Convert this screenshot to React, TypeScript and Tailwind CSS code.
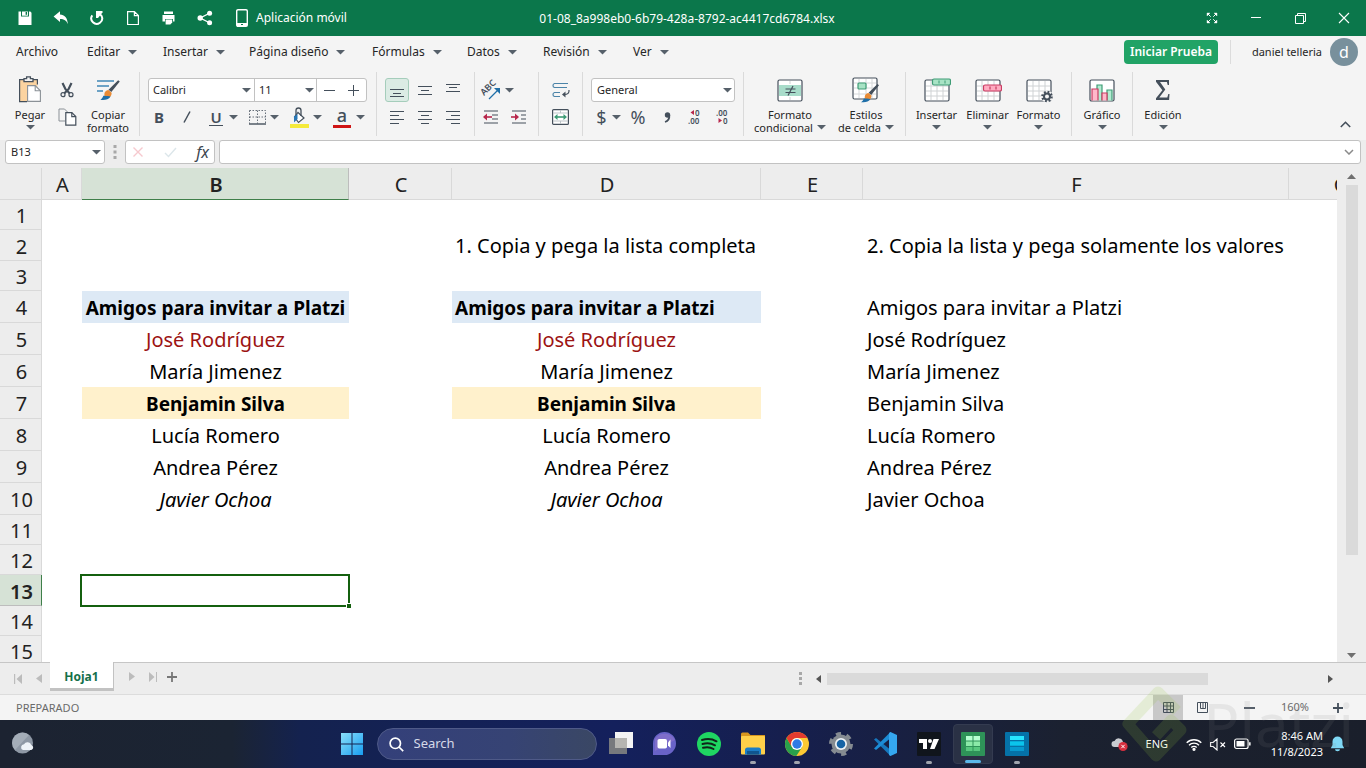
import type { ReactNode } from "react";

type IconProps = { className?: string };

const DARK = "#444f5b";

function Caret({ className = "" }: IconProps) {
  return (
    <svg className={"shrink-0 " + className} width="9" height="5" viewBox="0 0 9 5" aria-hidden="true">
      <path d="M0 0h9L4.5 4.6z" fill="#56606a" />
    </svg>
  );
}

/* ---------- title bar ---------- */

const quickActions: { label: string; icon: ReactNode }[] = [
  {
    label: "Guardar",
    icon: (
      <svg width="16" height="16" viewBox="0 0 16 16" fill="#fff">
        <path fillRule="evenodd" d="M1.500 1.500h11.800l1.200 1.200V15H1.500zM4 1.500v5h8v-5z" />
        <path d="M5 1.500h6v4.200H5z" />
        <path d="M8.600 2h1.500v2.800H8.600z" fill="#0b774b" />
      </svg>
    ),
  },
  {
    label: "Deshacer",
    icon: (
      <svg width="16" height="16" viewBox="0 0 16 16" fill="#fff">
        <path d="M.6 6.400 7 1.200v3.200c4.400 0 7.600 3.400 7.800 9.600-1.300-3.500-3.600-5-7.800-5.100v3z" />
      </svg>
    ),
  },
  {
    label: "Rehacer",
    icon: (
      <svg width="16" height="16" viewBox="0 0 16 16" fill="none" stroke="#fff" strokeWidth="2">
        <path d="M3.300 5.300a5.400 5.400 0 1 0 9.200.6L9.500 3" />
        <path d="M7 1h6.500v1.600L9 8H7z" fill="#fff" stroke="none" />
      </svg>
    ),
  },
  {
    label: "Nuevo",
    icon: (
      <svg width="14" height="16" viewBox="0 0 14 16" fill="none" stroke="#fff" strokeWidth="1.200">
        <path d="M1.600 1.600h6.800l4 4v8.900H1.600zM8.400 1.600v4h4" />
      </svg>
    ),
  },
  {
    label: "Imprimir",
    icon: (
      <svg width="16" height="16" viewBox="0 0 16 16" fill="#fff">
        <path d="M3 1.500h9V4H3zM1.500 5h12v6.500H12V9H4v2.500H1.500z" />
        <path d="M4.600 9.600h6.600v2.800L9.300 14.500H4.600z" />
      </svg>
    ),
  },
  {
    label: "Compartir",
    icon: (
      <svg width="16" height="16" viewBox="0 0 16 16" fill="#fff">
        <path d="M13 3 3.200 8l9.800 5" fill="none" stroke="#fff" strokeWidth="1.400" />
        <circle cx="12.600" cy="3.200" r="2.500" />
        <circle cx="3.200" cy="8" r="2.700" />
        <circle cx="12.600" cy="12.800" r="2.500" />
      </svg>
    ),
  },
];

function TitleBar() {
  return (
    <header className="grid h-9 shrink-0 grid-cols-[1fr_auto_1fr] items-center bg-[#0b774b] text-xs text-white">
      <div className="flex items-center pl-[7px]">
        {quickActions.map((a) => (
          <button key={a.label} aria-label={a.label} className="flex h-9 w-9 items-center justify-center">
            {a.icon}
          </button>
        ))}
        <button className="flex h-9 items-center gap-2 pl-[13px] whitespace-nowrap">
          <svg width="12" height="18" viewBox="0 0 12 18" aria-hidden="true">
            <rect x=".7" y=".7" width="10.600" height="16.600" rx="1.300" fill="none" stroke="#fff" strokeWidth="1.400" />
            <path d="M1 14h10v3H1z" fill="#fff" />
            <path d="M5 15.500h2" stroke="#0b774b" />
          </svg>
          Aplicación móvil
        </button>
      </div>
      <h1 className="pt-0.5 pl-2">01-08_8a998eb0-6b79-428a-8792-ac4417cd6784.xlsx</h1>
      <div className="flex justify-end">
        <button aria-label="Pantalla completa" className="flex h-9 w-11 items-center justify-center">
          <svg width="12" height="12" viewBox="0 0 12 12" fill="#fff" stroke="#fff">
            <path d="M1 1h3L1 4zM11 1v3L8 1zM1 11V8l3 3zM11 11H8l3-3z" strokeWidth=".4" />
            <path d="m2 2 2.700 2.700M10 2 7.300 4.700M2 10l2.700-2.700M10 10 7.300 7.300" />
          </svg>
        </button>
        <button aria-label="Minimizar" className="flex h-9 w-11 items-center justify-center">
          <svg width="10" height="10" viewBox="0 0 10 10"><path d="M0 4.500h10" stroke="#fff" /></svg>
        </button>
        <button aria-label="Restaurar" className="flex h-9 w-11 items-center justify-center">
          <svg width="11" height="11" viewBox="0 0 11 11" fill="none" stroke="#fff">
            <path d="M.5 2.500h8v8h-8zM2.500 2.500v-2h8v8h-2" />
          </svg>
        </button>
        <button aria-label="Cerrar" className="flex h-9 w-11 items-center justify-center">
          <svg width="12" height="12" viewBox="0 0 12 12"><path d="m1 1 10 10M11 1 1 11" stroke="#fff" strokeWidth="1.100" /></svg>
        </button>
      </div>
    </header>
  );
}

/* ---------- menu ---------- */

const menus: { label: string; width: string; caret: boolean }[] = [
  { label: "Archivo", width: "w-[71px]", caret: false },
  { label: "Editar", width: "w-[76px]", caret: true },
  { label: "Insertar", width: "w-[86px]", caret: true },
  { label: "Página diseño", width: "w-[123px]", caret: true },
  { label: "Fórmulas", width: "w-[95px]", caret: true },
  { label: "Datos", width: "w-[76px]", caret: true },
  { label: "Revisión", width: "w-[90px]", caret: true },
  { label: "Ver", width: "w-[60px]", caret: true },
];

function MenuBar() {
  return (
    <nav className="flex h-8 shrink-0 items-center bg-[#f4f4f4] pl-4 text-xs">
      {menus.map((m) => (
        <button key={m.label} className={"flex items-center gap-2 whitespace-nowrap " + m.width}>
          {m.label}
          {m.caret && <Caret />}
        </button>
      ))}
      <div className="ml-auto flex items-center">
        <button className="h-6 w-[94px] rounded-sm bg-[#21a366] text-xs font-semibold whitespace-nowrap text-white">
          Iniciar Prueba
        </button>
        <span className="ml-3 h-6 border-l border-[#dcdcdc]" />
        <button className="flex w-[135px] items-center justify-end gap-2 pr-2 text-[11px] whitespace-nowrap">
          daniel telleria
          <span className="flex h-7 w-7 items-center justify-center rounded-full bg-[#78909c] text-base text-white">d</span>
        </button>
      </div>
    </nav>
  );
}

/* ---------- ribbon ---------- */

function Group({ className = "", children }: { className?: string; children: ReactNode }) {
  return <div className={"flex h-16 shrink-0 border-r border-[#dadada] " + className}>{children}</div>;
}

function Tool({ label, className = "w-7", children }: { label: string; className?: string; children: ReactNode }) {
  return (
    <button aria-label={label} className={"flex h-6 shrink-0 items-center justify-center " + className}>
      {children}
    </button>
  );
}

function BigTool({ lines, caret, className, children }: { lines: string[]; caret?: boolean; className: string; children: ReactNode }) {
  return (
    <button className={"flex shrink-0 flex-col items-center pt-1 text-[11px] leading-[13px] " + className}>
      <span className="mb-1 flex h-7 items-center">{children}</span>
      {lines.map((l, i) => (
        <span key={l} className="flex items-center gap-1 whitespace-nowrap">
          {l}
          {caret && lines.length > 1 && i === lines.length - 1 && <Caret />}
        </span>
      ))}
      {caret && lines.length === 1 && <Caret className="mt-1" />}
    </button>
  );
}

function Lines({ rows }: { rows: [number, number, number][] }) {
  return (
    <svg width="14" height="14" viewBox="0 0 14 14" fill={DARK} shapeRendering="crispEdges" overflow="visible" aria-hidden="true">
      {rows.map(([y, a, b]) => (
        <rect key={y} x={a} y={y} width={b - a} height="1" />
      ))}
    </svg>
  );
}

function TableBase({ children }: { children?: ReactNode }) {
  return (
    <svg width="28" height="26" viewBox="0 0 28 26" fill="none" aria-hidden="true">
      <rect x="2" y="3" width="24" height="21" rx="1.500" fill="#fff" stroke={DARK} strokeWidth="1.200" />
      <path d="M3 9h22M3 14h22M3 19h22M8 4v19M14 4v19M20 4v19" stroke="#cfd2d4" />
      {children}
    </svg>
  );
}

function Brush({ x, y }: { x: number; y: number }) {
  return (
    <g transform={`translate(${x} ${y})`}>
      <path d="M16.500 0 18 1.200 10.200 11 7.600 8.800z" fill={DARK} />
      <path d="M7.500 9 10.500 11.600C10.500 15 8 17 4.500 16.500 2.600 12 4.500 9.300 7.500 9z" fill="#e98b35" />
      <path d="M2.800 14.500c2 .2 4.300-.2 6.700.6C7.500 18.200 4 18.700 0 18.200c1.500-.8 2.200-2 2.800-3.700z" fill="#1f6fa8" />
    </g>
  );
}

function Ribbon() {
  return (
    <div className="flex h-[72px] shrink-0 overflow-hidden bg-[#f4f4f4] pt-1" role="toolbar" aria-label="Inicio">
      <Group className="w-[140px] pl-2">
        <BigTool lines={["Pegar"]} caret className="w-11">
          <svg width="24" height="28" viewBox="0 0 24 28" fill="none">
            <path d="M1.600 3.600h17.800v22H1.600z" fill="#fbd3a0" />
            <path d="M6 3.600H1.600v22H9M15 3.600h4.400v5" stroke={DARK} strokeWidth="1.200" />
            <path d="M6 2.600h2.600V.8h3.800v1.800H15v3H6z" fill="#f4f4f4" stroke={DARK} strokeWidth="1.300" />
            <path d="M9.600 9.600h7.600l5.200 5.200v10.600H9.600z" fill="#fff" stroke="#8b9197" strokeWidth="1.100" />
            <path d="M17.200 9.600v5.200h5.200" stroke="#8b9197" strokeWidth="1.100" />
          </svg>
        </BigTool>
        <div className="flex flex-col gap-[3px] pt-[6px]">
          <Tool label="Cortar" className="w-[30px]">
            <svg width="14" height="16" viewBox="0 0 14 16" fill="none" stroke={DARK}>
              <path d="M2.500 1 5.500 7.200l4.100 4M11.500 1 8.500 7.200l-4.100 4" strokeWidth="2.200" />
              <circle cx="3" cy="12.700" r="2" strokeWidth="1.200" />
              <circle cx="11" cy="12.700" r="2" strokeWidth="1.200" />
            </svg>
          </Tool>
          <Tool label="Copiar" className="w-[30px]">
            <svg width="19" height="18" viewBox="0 0 19 18" fill="none">
              <path d="M7 13H1V1h5.500l3 3" stroke="#8b9197" />
              <path d="M7.800 4.600h6l4 4v8.600h-10z" fill="#fff" stroke={DARK} strokeWidth="1.200" />
              <path d="M13.800 4.600v4h4" stroke={DARK} strokeWidth="1.200" />
            </svg>
          </Tool>
        </div>
        <BigTool lines={["Copiar", "formato"]} className="w-[52px]">
          <svg width="25" height="24" viewBox="0 0 25 24" fill="none">
            <path d="M1 3h17M1 8h12M1 13h6" stroke="#3f87b5" strokeWidth="1.300" />
            <g transform="scale(1.080)"><Brush x={4} y={2} /></g>
          </svg>
        </BigTool>
      </Group>

      <Group className="w-[237px] flex-col gap-[3px] pt-[6px] pl-2">
        <div className="flex h-6 w-[219px] items-center rounded-[3px] border border-[#c2c2c2] bg-white text-[11px]">
          <select aria-label="Fuente" className="w-[93px] appearance-none pl-1 outline-none"><option>Calibri</option></select>
          <Caret />
          <select aria-label="Tamaño" className="ml-[3px] h-full w-[51px] appearance-none border-l border-[#c2c2c2] pl-1 outline-none"><option>11</option></select>
          <Caret />
          <button aria-label="Reducir" className="ml-[2px] flex h-full flex-1 items-center justify-center border-l border-[#c2c2c2]">
            <svg width="11" height="11" viewBox="0 0 11 11"><path d="M0 5.500h11" stroke={DARK} /></svg>
          </button>
          <button aria-label="Aumentar" className="flex h-full flex-1 items-center justify-center">
            <svg width="11" height="11" viewBox="0 0 11 11"><path d="M0 5.500h11M5.500 0v11" stroke={DARK} /></svg>
          </button>
        </div>
        <div className="flex text-[#444f5b]">
          <Tool label="Negrita" className="w-[22px]"><b className="text-[15px]">B</b></Tool>
          <Tool label="Cursiva" className="w-[33px]">
            <svg width="8" height="12" viewBox="0 0 8 12"><path d="M7 .5 1 11.500" stroke={DARK} strokeWidth="1.500" /></svg>
          </Tool>
          <div className="flex w-[41px] items-center">
            <Tool label="Subrayado" className="w-[26px]"><span className="border-b border-[#444f5b] px-px text-[15px] leading-4 font-semibold">U</span></Tool>
            <Caret />
          </div>
          <div className="flex w-[41px] items-center">
            <Tool label="Bordes" className="w-[26px]">
              <svg width="17" height="15" viewBox="0 0 17 15" fill="none" stroke={DARK}>
                <path d="M.5.5h16v13M.5.5v13M8.500.5v13M.5 7h16" strokeDasharray="1.500 1.500" opacity=".8" />
                <path d="M0 14h17" strokeWidth="1.400" />
              </svg>
            </Tool>
            <Caret />
          </div>
          <div className="flex w-[43px] items-center">
            <Tool label="Relleno" className="w-[28px]">
              <svg width="19" height="21" viewBox="0 0 19 21" fill="none">
                <path d="M0 17h19v4H0z" fill="#f5ea3b" />
                <path d="m8 5.500 6 5.500-5.500 4.500L4.500 10z" fill="#fff" stroke={DARK} strokeWidth="1.200" />
                <path d="M6 9V3.500a2.500 2.500 0 0 1 5 0V9" stroke={DARK} strokeWidth="1.300" />
                <path d="M4 15.500V9.500L7.500 7v5z" fill="#2b78b5" />
              </svg>
            </Tool>
            <Caret />
          </div>
          <div className="flex items-center">
            <Tool label="Color de fuente" className="w-[28px]">
              <span className="flex h-[21px] w-[18px] items-start justify-center border-b-[3px] border-[#cf1414] text-lg leading-4 font-medium">a</span>
            </Tool>
            <Caret />
          </div>
        </div>
      </Group>

      <Group className="w-[97px] flex-col gap-[3px] border-r-0 pt-[6px] pl-[6px]">
        <div className="flex">
          <Tool label="Alinear abajo" className="mx-0.5 w-6 rounded-[3px] border border-[#a5cdbb] bg-[#dbebe4]"><Lines rows={[[6, 0, 14], [10, 3, 11], [13, 0, 14]]} /></Tool>
          <Tool label="Alinear en medio"><Lines rows={[[3, 0, 14], [7, 3, 11], [11, 0, 14]]} /></Tool>
          <Tool label="Alinear arriba"><Lines rows={[[1, 0, 14], [4, 3, 11], [8, 0, 14]]} /></Tool>
        </div>
        <div className="flex">
          <Tool label="Izquierda"><Lines rows={[[1, 0, 14], [5, 0, 9], [9, 0, 14], [13, 0, 9]]} /></Tool>
          <Tool label="Centro"><Lines rows={[[1, 0, 14], [5, 3, 11], [9, 0, 14], [13, 3, 11]]} /></Tool>
          <Tool label="Derecha"><Lines rows={[[1, 0, 14], [5, 5, 14], [9, 0, 14], [13, 5, 14]]} /></Tool>
        </div>
      </Group>

      <Group className="w-[65px] flex-col gap-[3px] border-l pt-[6px] pl-px">
        <div className="flex items-center">
          <Tool label="Orientación">
            <svg width="24" height="24" viewBox="0 0 24 24" overflow="visible">
              <text transform="translate(6 18) rotate(-45)" fontSize="9" fontWeight="600" fill={DARK}>ABC</text>
              <path d="m11 21 9-9" stroke="#1f6fa8" strokeWidth="1.300" />
              <path d="M16 10h6v6z" fill="#1f6fa8" />
            </svg>
          </Tool>
          <Caret className="ml-px" />
        </div>
        <div className="flex">
          <Tool label="Reducir sangría">
            <svg width="15" height="14" viewBox="0 0 15 14" fill="none" stroke={DARK} strokeWidth="1.200">
              <path d="M1 1h14M9 5h6M9 9h6M1 13h14" />
              <path d="M4 7h5" stroke="#b8274c" strokeWidth="1.600" /><path d="m0 7 4-3.500v7z" fill="#b8274c" stroke="none" />
            </svg>
          </Tool>
          <Tool label="Aumentar sangría">
            <svg width="15" height="14" viewBox="0 0 15 14" fill="none" stroke={DARK} strokeWidth="1.200">
              <path d="M1 1h14M10 5h5M10 9h5M1 13h14" />
              <path d="M0 7h5" stroke="#b8274c" strokeWidth="1.600" /><path d="M8 7 4 3.500v7z" fill="#b8274c" stroke="none" />
            </svg>
          </Tool>
        </div>
      </Group>

      <Group className="w-[44px] flex-col items-center gap-[3px] pt-[6px]">
        <Tool label="Ajustar texto">
          <svg width="18" height="16" viewBox="0 0 18 16" fill="none" stroke="#4c84a8" strokeWidth="1.200">
            <path d="M15 5.500H2.500a2 2 0 0 1-1.500-2 2 2 0 0 1 1.500-2H16M8 14.500H2.500a2 2 0 0 1-1.500-2 2 2 0 0 1 1.500-2H8" />
            <path d="M17 8c.3 3-1 4.500-5 4.500" stroke={DARK} /><path d="M13.500 9.500v6L10 12.500z" fill={DARK} stroke="none" />
          </svg>
        </Tool>
        <Tool label="Combinar">
          <svg width="17" height="16" viewBox="0 0 17 16" fill="none">
            <rect x=".6" y=".6" width="15.800" height="14.800" rx="1" fill="#fff" stroke={DARK} strokeWidth="1.200" />
            <path d="M1 4h15M1 12h15M8.500 1v3M8.500 12v3" stroke="#bfc5c9" />
            <path d="M4 8h9" stroke="#3f9c76" strokeWidth="1.600" />
            <path d="M2 8l3.500-3v6zM15 8l-3.500-3v6z" fill="#3f9c76" />
          </svg>
        </Tool>
      </Group>

      <Group className="w-[161px] flex-col gap-[3px] pt-[6px] pl-2">
        <div className="flex h-6 w-[144px] items-center rounded-[3px] border border-[#c2c2c2] bg-white text-[11px]">
          <select aria-label="Formato de número" className="w-[131px] appearance-none pl-[5px] outline-none"><option>General</option></select>
          <Caret />
        </div>
        <div className="flex items-center text-[#444f5b]">
          <Tool label="Moneda" className="w-[21px]"><span className="text-lg">$</span></Tool>
          <Caret />
          <Tool label="Porcentaje" className="ml-[2px] w-[30px]"><span className="text-lg">%</span></Tool>
          <Tool label="Separador">
            <svg width="7" height="11" viewBox="0 0 7 11"><circle cx="3.500" cy="3" r="2.700" fill={DARK} /><path d="M5.300 3c.3 3.500-1.200 6-4.300 7" fill="none" stroke={DARK} strokeWidth="1.800" /></svg>
          </Tool>
          <Tool label="Aumentar decimales">
            <svg width="16" height="18" viewBox="0 0 16 18" fill={DARK} fontSize="8" fontWeight="600" overflow="visible"><path d="M7 2v5L3.500 4.500z" fill="#b8274c" /><text x="8" y="8">0</text><text x="1" y="16">.00</text></svg>
          </Tool>
          <Tool label="Disminuir decimales">
            <svg width="16" height="18" viewBox="0 0 16 18" fill={DARK} fontSize="8" fontWeight="600" overflow="visible"><path d="M3.500 10v5L7 12.500z" fill="#b8274c" /><text x="8" y="16">0</text><text x="1" y="8">.00</text></svg>
          </Tool>
        </div>
      </Group>

      <Group className="w-[162px] pl-2">
        <BigTool lines={["Formato", "condicional"]} caret className="w-[76px]">
          <svg width="28" height="26" viewBox="0 0 28 26" fill="none">
            <rect x="2" y="3" width="24" height="21" rx="1.500" fill="#fff" stroke={DARK} strokeWidth="1.200" />
            <path d="M3 8h22v11H3z" fill="#a8dcca" /><path d="M14 4v3M14 20v3" stroke="#cfd2d4" />
            <path d="M9.500 12h10M9.500 15.500h10M17 9l-5 9.500" stroke={DARK} strokeWidth="1.200" />
          </svg>
        </BigTool>
        <BigTool lines={["Estilos", "de celda"]} caret className="w-[76px]">
          <svg width="28" height="28" viewBox="0 0 28 28" fill="none">
            <rect x="1" y="2" width="24" height="21" rx="1.500" fill="#fff" stroke={DARK} strokeWidth="1.200" />
            <path d="M2 7h22M2 12h22M2 18h22M7 3v19M14 3v19M20 3v19" stroke="#d5d8da" />
            <rect x="6" y="7" width="8" height="6" rx="1" fill="#a8e3c5" stroke="#3f9c76" strokeWidth="1.200" />
            <Brush x={9} y={8} />
          </svg>
        </BigTool>
      </Group>

      <Group className="w-[166px] pl-[5px]">
        <BigTool lines={["Insertar"]} caret className="w-[51px]">
          <TableBase>
            <rect x="9.500" y="2" width="18" height="6" rx="1.500" fill="#a8e3c5" stroke="#3f9c76" strokeWidth="1.200" />
            <path d="M16 3.500v3M22 3.500v3" stroke="#3f9c76" />
          </TableBase>
        </BigTool>
        <BigTool lines={["Eliminar"]} caret className="w-[51px]">
          <TableBase>
            <rect x="9.500" y="8" width="18" height="6" rx="1.500" fill="#ffabc1" stroke="#c93b62" strokeWidth="1.200" />
            <path d="M16 9.500v3M22 9.500v3" stroke="#b8274c" />
          </TableBase>
        </BigTool>
        <BigTool lines={["Formato"]} caret className="w-[51px]">
          <TableBase>
            <circle cx="22" cy="19.500" r="6" fill="#f4f4f4" />
            <circle cx="22" cy="19.500" r="4.600" fill="none" stroke={DARK} strokeWidth="2.400" strokeDasharray="1.800 1.810" />
            <circle cx="22" cy="19.500" r="3" fill="none" stroke={DARK} strokeWidth="2" />
          </TableBase>
        </BigTool>
      </Group>

      <Group className="w-[61px]">
        <BigTool lines={["Gráfico"]} caret className="w-full">
          <svg width="28" height="26" viewBox="0 0 28 26" fill="none" strokeWidth="1.200">
            <rect x="2" y="3" width="24" height="21" rx="1.500" fill="#fff" stroke={DARK} />
            <path d="M9 23.500V8h5v15.500M19 23.500V13h5v10.500" fill="#b3ecd2" stroke="#3f9c76" />
            <path d="M4 23.500V12h6v11.500M14 23.500V16h5v7.500" fill="#ffb8ca" stroke="#c93b62" />
          </svg>
        </BigTool>
      </Group>

      <BigTool lines={["Edición"]} caret className="h-16 w-[60px]">
        <svg width="16" height="22" viewBox="0 0 16 22"><path d="M1 1h13v5h-1.300l-.8-3H5l5.300 7.600L4.300 18.500h8l1-3.500h1.200l-.4 6H1v-1.800l6.400-8L1 2.800z" fill={DARK} /></svg>
      </BigTool>
      <button aria-label="Contraer cinta" className="mt-auto mr-[15px] mb-3 ml-auto">
        <svg width="11" height="7" viewBox="0 0 11 7" fill="none" stroke={DARK} strokeWidth="1.600"><path d="m.8 6 4.700-4.700L10.200 6" /></svg>
      </button>
    </div>
  );
}

/* ---------- formula bar ---------- */

function FormulaBar() {
  return (
    <div className="flex h-7 shrink-0 bg-[#ededed] pr-[5px] pb-1 pl-[5px] text-[11px]">
      <div className="flex w-[100px] items-center rounded-[3px] border border-[#c2c2c2] bg-white">
        <input aria-label="Cuadro de nombres" defaultValue="B13" className="w-[86px] bg-transparent pl-[5px] outline-none" />
        <Caret />
      </div>
      <svg className="mx-2 my-auto" width="4" height="14" viewBox="0 0 4 14" fill="#a8a8a8" aria-hidden="true">
        <path d="M.5 0h3v3h-3zM.5 5.500h3v3h-3zM.5 11h3v3h-3z" />
      </svg>
      <div className="flex w-[90px] items-center justify-between rounded-[3px] border border-[#c2c2c2] bg-white pr-[5px] pl-[6px]">
        <button aria-label="Cancelar">
          <svg width="12" height="12" viewBox="0 0 12 12"><path d="m1.500 1.500 9 9M10.500 1.500l-9 9" stroke="#f6c9ce" strokeWidth="1.400" /></svg>
        </button>
        <button aria-label="Aceptar">
          <svg width="13" height="12" viewBox="0 0 13 12"><path d="m1 7 3.500 3.500L12 2" fill="none" stroke="#dce6ea" strokeWidth="1.400" /></svg>
        </button>
        <button className="text-base leading-5 text-[#3c4650] italic">fx</button>
      </div>
      <div className="ml-1 flex flex-1 items-center rounded-[3px] border border-[#c2c2c2] bg-white pr-[6px]">
        <input aria-label="Barra de fórmulas" className="h-full min-w-0 flex-1 bg-transparent px-2 outline-none" />
        <svg width="10" height="6" viewBox="0 0 10 6" fill="none" stroke="#8a8a8a" strokeWidth="1.500" aria-hidden="true"><path d="m1 1 4 4 4-4" /></svg>
      </div>
    </div>
  );
}

/* ---------- sheet ---------- */

const columns = [
  { name: "A", width: "w-[40px]" },
  { name: "B", width: "w-[267px]" },
  { name: "C", width: "w-[103px]" },
  { name: "D", width: "w-[309px]" },
  { name: "E", width: "w-[102px]" },
  { name: "F", width: "w-[426px]" },
  { name: "G", width: "w-[103px]" },
];

const rowHeights = [
  "h-[30px]", "h-[31px]", "h-[30px]", "h-8", "h-8", "h-8", "h-8", "h-8",
  "h-8", "h-8", "h-[30px]", "h-[30px]", "h-[31px]", "h-[30px]", "h-[30px]",
];

const cells: Record<string, { text: string; className: string }> = {
  D2: { text: "1. Copia y pega la lista completa", className: "pl-[3px]" },
  F2: { text: "2. Copia la lista y pega solamente los valores", className: "pl-1" },
  B4: { text: "Amigos para invitar a Platzi", className: "bg-[#dde9f5] pt-0.5 text-center text-[19px] font-bold" },
  D4: { text: "Amigos para invitar a Platzi", className: "bg-[#dde9f5] pt-0.5 pl-[3px] text-[19px] font-bold" },
  F4: { text: "Amigos para invitar a Platzi", className: "pt-0.5 pl-1" },
};

const friends = [
  { name: "José Rodríguez", className: "pt-0.5 text-center text-[#9c1313]" },
  { name: "María Jimenez", className: "pt-0.5 text-center" },
  { name: "Benjamin Silva", className: "bg-[#fff1cc] pt-0.5 text-center text-[19px] font-bold" },
  { name: "Lucía Romero", className: "pt-0.5 text-center" },
  { name: "Andrea Pérez", className: "pt-0.5 text-center" },
  { name: "Javier Ochoa", className: "pt-0.5 text-center italic" },
];

friends.forEach((f, i) => {
  cells["B" + (i + 5)] = { text: f.name, className: f.className };
  cells["D" + (i + 5)] = { text: f.name, className: f.className };
  cells["F" + (i + 5)] = { text: f.name, className: "pt-0.5 pl-1" };
});

function Sheet() {
  return (
    <div className="flex min-h-0 flex-1 bg-[#ededed]">
      <div className="min-w-0 flex-1 overflow-hidden bg-white">
        <table className="w-[1392px] table-fixed border-separate border-spacing-0 text-xl leading-7 text-black">
          <colgroup>
            <col className="w-[42px]" />
            {columns.map((c) => <col key={c.name} className={c.width} />)}
          </colgroup>
          <thead>
            <tr className="h-8 text-[#222]">
              <th className="border-r border-b border-[#d9d9d9] bg-[#ededed] p-0" aria-label="Seleccionar todo" />
              {columns.map((c) => (
                <th
                  key={c.name}
                  scope="col"
                  className={c.name === "B"
                    ? "border-r border-b border-r-[#bdbdbd] border-b-[#3f7f4a] bg-[#d6e2d6] p-0 pt-[3px] pl-0.5 leading-6 font-semibold"
                    : "border-r border-b border-[#d9d9d9] bg-[#ededed] p-0 pt-[3px] pl-0.5 leading-6 font-normal"}
                >
                  {c.name}
                </th>
              ))}
            </tr>
          </thead>
          <tbody>
            {rowHeights.map((h, i) => (
              <tr key={i} className={h}>
                <th
                  scope="row"
                  className={i === 12
                    ? "border-r border-b border-r-[#3f7f4a] border-b-[#bdbdbd] bg-[#d6e2d6] p-0 pt-[3px] pl-0.5 leading-6 font-semibold text-[#222]"
                    : "border-r border-b border-[#d9d9d9] bg-[#ededed] p-0 pt-[3px] pl-0.5 leading-6 font-normal text-[#222]"}
                >
                  {i + 1}
                </th>
                {columns.map((c) => {
                  const key = c.name + (i + 1);
                  const cell = cells[key];
                  if (key === "B13") {
                    return (
                      <td key={key} className="relative p-0">
                        <div className="absolute -top-px -right-px -bottom-px -left-0.5 border-2 border-[#14600f]">
                          <span className="absolute -right-[3px] -bottom-[3px] h-[5px] w-[5px] border-t border-l border-white bg-[#14600f]" />
                        </div>
                      </td>
                    );
                  }
                  return (
                    <td key={key} className={"whitespace-nowrap " + (cell ? cell.className : "p-0")}>
                      {cell ? cell.text : null}
                    </td>
                  );
                })}
              </tr>
            ))}
          </tbody>
        </table>
      </div>
      <div className="flex w-[29px] shrink-0 flex-col items-center gap-[5px] pt-[6px] pb-[3px]">
        <svg className="shrink-0" width="9" height="6" viewBox="0 0 9 6" aria-hidden="true"><path d="M0 5h9L4.500 0z" fill="#707070" /></svg>
        <div className="min-h-0 w-3 flex-1"><div className="h-[80%] bg-[#dadada]" /></div>
        <svg className="shrink-0" width="9" height="6" viewBox="0 0 9 6" aria-hidden="true"><path d="M0 0h9L4.500 5z" fill="#707070" /></svg>
      </div>
    </div>
  );
}

function SheetTabs() {
  return (
    <div className="flex h-[33px] shrink-0 border-t border-b border-t-[#c6c6c6] border-b-[#dcdcdc] bg-[#ededed]">
      <div className="flex w-[50px] items-center gap-[13px] pl-[14px]">
        <button aria-label="Primera hoja"><svg width="9" height="10" viewBox="0 0 9 10" fill="#bcbcbc"><path d="M0 0h1.200v10H0zM8 0v10L2.500 5z" /></svg></button>
        <button aria-label="Hoja anterior"><svg width="6" height="9" viewBox="0 0 6 9"><path d="M6 0v9L0 4.500z" fill="#bcbcbc" /></svg></button>
      </div>
      <button className="-mt-px h-[29px] w-16 border-r border-b-[3px] border-[#c2c2c2] bg-white pt-1 text-xs font-bold text-[#14704a]">Hoja1</button>
      <div className="flex items-center gap-[14px] pb-1 pl-[15px]">
        <button aria-label="Hoja siguiente"><svg width="6" height="9" viewBox="0 0 6 9"><path d="M0 0v9l6-4.500z" fill="#bcbcbc" /></svg></button>
        <button aria-label="Última hoja"><svg width="8" height="10" viewBox="0 0 8 10" fill="#bcbcbc"><path d="M7 0h1v10H7zM0 0v10l5.500-5z" /></svg></button>
        <button aria-label="Agregar hoja" className="-ml-1"><svg width="10" height="10" viewBox="0 0 10 10"><path d="M0 5h10M5 0v10" stroke="#777" strokeWidth="1.800" /></svg></button>
      </div>
      <div className="ml-auto flex w-[567px] items-center pr-[33px]">
        <svg width="3" height="13" viewBox="0 0 3 13" fill="#a8a8a8" aria-hidden="true"><path d="M0 0h3v3H0zM0 5h3v3H0zM0 10h3v3H0z" /></svg>
        <svg className="mr-[6px] ml-[14px]" width="5" height="8" viewBox="0 0 5 8" aria-hidden="true"><path d="M5 0v8L0 4z" fill="#555" /></svg>
        <div className="h-3 flex-1"><div className="h-full w-[76%] bg-[#dadada]" /></div>
        <svg width="5" height="8" viewBox="0 0 5 8" aria-hidden="true"><path d="M0 0v8l5-4z" fill="#555" /></svg>
      </div>
    </div>
  );
}

function StatusBar() {
  return (
    <div className="flex h-[25px] shrink-0 items-center bg-[#f4f4f4] pl-4 text-[11px] text-[#6a6a6a]">
      <span className="pt-0.5">PREPARADO</span>
      <div className="ml-auto flex h-full items-center pr-[23px]">
        <button aria-label="Vista normal" className="flex h-full w-[30px] items-center justify-center bg-[#c8c8c8]">
          <svg width="11" height="11" viewBox="0 0 11 11" fill="none" stroke={DARK}><path d="M.5.5h10v10H.5zM.5 4h10M.5 7.500h10M4 .5v10M7.500.5v10" /></svg>
        </button>
        <button aria-label="Diseño de página" className="ml-[14px]">
          <svg width="11" height="11" viewBox="0 0 11 11" fill="none" stroke={DARK}><path d="M.5.5h10v10H.5zM3.500.5v6h5v-6M6 .5v6" /></svg>
        </button>
        <button aria-label="Alejar" className="ml-9"><svg width="11" height="10" viewBox="0 0 11 10"><path d="M0 5h11" stroke={DARK} strokeWidth="1.800" /></svg></button>
        <span className="w-[78px] pl-0.5 text-center">160%</span>
        <button aria-label="Acercar"><svg width="10" height="10" viewBox="0 0 10 10"><path d="M0 5h10M5 0v10" stroke={DARK} strokeWidth="1.800" /></svg></button>
      </div>
    </div>
  );
}

/* ---------- taskbar ---------- */

const apps: { label: string; state?: "open" | "active"; icon: ReactNode }[] = [
  { label: "Vista de tareas", icon: <><path d="M8 1h18v16H8z" fill="#f4f4f4" /><path d="M2 7h18v16H2z" fill="#77797d" /><path d="M8 7h12v10H8z" fill="#b6b5b1" /></> },
  {
    label: "Chat",
    icon: <><path d="M2 24V12.500A11.500 11.500 0 1 1 13.500 24z" fill="#6963c8" /><path d="M4 8a11.500 11.500 0 0 1 20 1L4 20z" fill="#8d74c9" opacity=".6" /><rect x="6.500" y="8" width="9.500" height="9.500" rx="1.800" fill="#fff" /><path d="m17 11.500 2.500-3v8.500L17 14.500z" fill="#fff" /></>,
  },
  {
    label: "Spotify",
    icon: <><circle cx="14" cy="13" r="12" fill="#1fd662" /><path d="M7 9c5-1.500 10.500-1 14.500 1.300M7.500 13c4.500-1.200 9-.700 12.500 1.300M8 16.800c3.800-1 7.500-.6 10.500 1.200" fill="none" stroke="#10241a" strokeWidth="2" strokeLinecap="round" /></>,
  },
  {
    label: "Explorador",
    state: "open",
    icon: <><path d="M2 3a1.500 1.500 0 0 1 1.500-1.500H9L11.500 4H26v6H2z" fill="#d8961e" /><rect x="2" y="5" width="24" height="18.500" rx="1" fill="#ffd04a" /><path d="M6 23.500V19a2.500 2.500 0 0 1 2.500-2.500h11A2.500 2.500 0 0 1 22 19v4.500z" fill="#1b7dc6" /><path d="M8 20h12v3.500H8z" fill="#10568f" /></>,
  },
  {
    label: "Chrome",
    state: "open",
    icon: <><circle cx="14" cy="13" r="12" fill="#fcc934" /><path d="M3.600 7A12 12 0 0 0 13.300 25L19.200 16 14 13 9 16z" fill="#29a14b" /><path d="M24.400 7H14a6 6 0 0 0-5.300 3.200L8.800 16 3.600 7A12 12 0 0 1 24.400 7z" fill="#e33b2e" /><circle cx="14" cy="13" r="6" fill="#fff" /><circle cx="14" cy="13" r="4.700" fill="#2f7ae5" /></>,
  },
  {
    label: "Configuración",
    icon: <><circle cx="14" cy="13" r="9.500" fill="#858b91" /><circle cx="14" cy="13" r="10" fill="none" stroke="#858b91" strokeWidth="4" strokeDasharray="5 5.470" /><circle cx="14" cy="13" r="6" fill="#eef2f5" /><circle cx="14" cy="13" r="4.300" fill="#1764a5" /></>,
  },
  {
    label: "Visual Studio Code",
    icon: <><path d="M3 8.500 5 7l16 13-1.500 5z" fill="#1677bd" /><path d="m3 17.500 2 1.500L21 6l-1.500-5z" fill="#1c8cd6" /><path d="M19.500 1 26 4v18l-6.500 3-1.500-1V2z" fill="#35a7ef" /></>,
  },
  {
    label: "TradingView",
    state: "open",
    icon: <><rect x="2" y="1" width="24" height="24" rx="1" fill="#10151c" /><path d="M4 8h8v10H8v-6H4zM18.500 8H24l-4.500 10H15z" fill="#fff" /><circle cx="15" cy="10" r="2" fill="#fff" /></>,
  },
  {
    label: "Hojas de cálculo",
    state: "active",
    icon: <><rect x="2" y="1" width="24" height="24" rx="1" fill="#2e9358" /><path d="M7 5h6.500v4.500H7zM14.500 5H21v4.500h-6.500z" fill="#b6ffd1" /><path d="M7 10.500h6.500V15H7zM14.500 10.500H21V15h-6.500z" fill="#8be9a8" /><path d="M7 16h6.500v4H7zM14.500 16H21v4h-6.500z" fill="#58c77e" /></>,
  },
  {
    label: "Documentos",
    state: "open",
    icon: <><rect x="2" y="1" width="24" height="24" rx="1" fill="#0572a8" /><path d="M7 5h14v4H7z" fill="#27e5ff" /><path d="M7 10.300h14v4.400H7z" fill="#0bc4ec" /><path d="M7 16h14v4H7z" fill="#0799cf" /></>,
  },
];

function Taskbar() {
  return (
    <footer className="grid h-12 shrink-0 grid-cols-[1fr_auto_1fr] items-center bg-[linear-gradient(90deg,#1c2331_0%,#1b2433_17%,#14224f_22%,#14205c_45%,#161f4d_58%,#1b2130_78%,#1a1f2b_100%)] text-white">
      <button aria-label="Tiempo" className="w-fit pl-[11px]">
        <svg width="24" height="24" viewBox="0 0 24 24">
          <circle cx="11.500" cy="11" r="10.500" fill="#8e98a5" />
          <path d="M1 11A10.500 10.500 0 0 1 18 3L4 18a10 10 0 0 1-3-7z" fill="#b3bbc4" opacity=".6" />
          <path d="M12 18a3 3 0 0 1 1-5.800 4 4 0 0 1 7.300.8 2.600 2.600 0 0 1 0 5z" fill="#eef3f8" />
        </svg>
      </button>
      <div className="flex items-center pl-0.5">
        <button aria-label="Inicio" className="flex h-11 w-11 items-center justify-center">
          <svg width="24" height="24" viewBox="0 0 24 24">
            <defs><linearGradient id="win" x2="1" y2="1"><stop stopColor="#8be0fb" /><stop offset="1" stopColor="#189df0" /></linearGradient></defs>
            <path d="M1 1h10.500v10.500H1zM12.500 1H23v10.500H12.500zM1 12.500h10.500V23H1zM12.500 12.500H23V23H12.500z" fill="url(#win)" />
          </svg>
        </button>
        <label className="mr-0.5 ml-[3px] flex h-8 w-[220px] items-center gap-[10px] rounded-full border border-[#4f5a88] bg-[linear-gradient(90deg,#34407a,#364374_60%,#3a4764)] pl-[11px]">
          <svg width="15" height="15" viewBox="0 0 15 15" fill="none" stroke="#fff" strokeWidth="1.700"><circle cx="6.300" cy="6.300" r="5.200" /><path d="m10 10 4.200 4.200" /></svg>
          <input aria-label="Buscar" placeholder="Search" className="w-40 bg-transparent text-[13px] outline-none placeholder:text-[#d5d9e8]" />
        </label>
        {apps.map((a) => (
          <button
            key={a.label}
            aria-label={a.label}
            className={a.state === "active"
              ? "relative mx-0.5 flex h-10 w-10 items-center justify-center rounded-sm border border-[#343b50] bg-[#2a3145]"
              : "relative flex h-10 w-11 items-center justify-center"}
          >
            <svg width="28" height="26" viewBox="0 0 28 26">{a.icon}</svg>
            {a.state === "open" && <span className="absolute bottom-0 left-[19px] h-[3px] w-[6px] rounded-full bg-[#a0a4ad]" />}
            {a.state === "active" && <span className="absolute bottom-0 left-[11px] h-[3px] w-4 rounded-full bg-[#5bb8ea]" />}
          </button>
        ))}
      </div>
      <div className="flex items-center justify-end pr-[21px] text-[11px] leading-4">
        <svg width="17" height="16" viewBox="0 0 17 16" aria-hidden="true">
          <path d="M3.500 11a3 3 0 0 1 0-6 4.500 4.500 0 0 1 8.500 1 3 3 0 0 1 1 5z" fill="#c9cbd0" />
          <circle cx="12" cy="10.500" r="4.600" fill="#d62f3e" /><path d="m10.300 8.800 3.400 3.400m0-3.400-3.400 3.400" stroke="#fff" />
        </svg>
        <span className="ml-[18px]">ENG</span>
        <svg className="ml-[18px]" width="16" height="13" viewBox="0 0 16 13" fill="none" stroke="#fff" strokeWidth="1.300" aria-hidden="true">
          <path d="M.7 4.800a10.300 10.300 0 0 1 14.600 0M3 7.200a7 7 0 0 1 10 0M5.300 9.500a3.800 3.800 0 0 1 5.400 0" /><circle cx="8" cy="11.300" r="1" fill="#fff" />
        </svg>
        <svg className="ml-2" width="16" height="13" viewBox="0 0 16 13" fill="none" stroke="#fff" strokeWidth="1.100" aria-hidden="true">
          <path d="M.6 4.500h2.500L7 1v11L3.100 8.500H.6zM10.500 4.500l4.500 4.500M15 4.500 10.500 9" />
        </svg>
        <svg className="ml-2" width="17" height="12" viewBox="0 0 17 12" fill="none" stroke="#fff" strokeWidth="1.200" aria-hidden="true">
          <rect x=".6" y="1" width="13.500" height="9.500" rx="2" /><path d="M2.500 3h8v5.500h-8z" fill="#fff" stroke="none" /><path d="M15.800 4.200v3.200" strokeWidth="1.600" />
        </svg>
        <div className="ml-[14px] w-[58px] whitespace-nowrap">
          <div className="flex justify-end">8:46 AM</div>
          <div className="flex justify-end">11/8/2023</div>
        </div>
        <svg className="ml-[7px]" width="15" height="16" viewBox="0 0 15 16" fill="#7fd8f5" aria-hidden="true">
          <path d="M7.500.5a5 5 0 0 1 5 5V9l1.700 3.200H.8L2.500 9V5.500a5 5 0 0 1 5-5zM5 13.200h5a2.500 2 0 0 1-5 0z" />
        </svg>
      </div>
    </footer>
  );
}

function Watermark() {
  return (
    <div className="pointer-events-none absolute right-3 bottom-1 flex items-center gap-[14px]" aria-hidden="true">
      <svg width="68" height="80" viewBox="0 0 68 80" fill="none">
        <path d="M56 27 37 8 7 40l28 32 25-26-10-10-15 16" stroke="#98ca3f" strokeOpacity=".16" strokeWidth="11" strokeLinejoin="round" />
      </svg>
      <span className="text-6xl leading-none text-[#808080]/13">Platzi</span>
    </div>
  );
}

export default function App() {
  return (
    <div className="relative flex h-screen flex-col overflow-hidden bg-[#f4f4f4] font-['Noto_Sans','Open_Sans',sans-serif] text-[#262626]">
      <TitleBar />
      <MenuBar />
      <Ribbon />
      <FormulaBar />
      <Sheet />
      <SheetTabs />
      <StatusBar />
      <Taskbar />
      <Watermark />
    </div>
  );
}
